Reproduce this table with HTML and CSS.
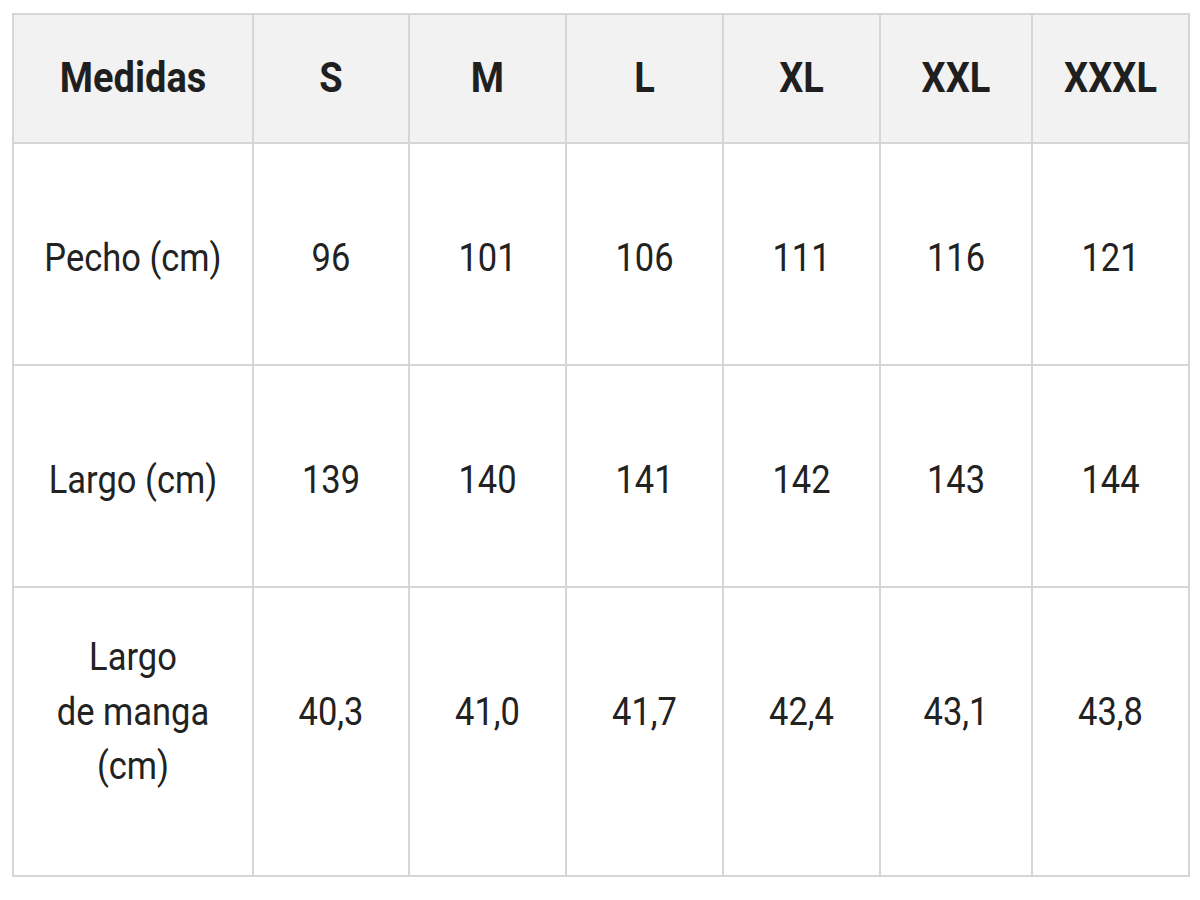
FILE: index.html
```html
<!DOCTYPE html>
<html>
<head>
<meta charset="utf-8">
<link rel="stylesheet" href="styles.css">
</head>
<body>
<table class="size-table">
  <colgroup>
    <col class="c-first">
    <col class="c-s"><col class="c-m"><col class="c-m"><col class="c-m"><col class="c-n"><col class="c-m">
  </colgroup>
  <thead>
    <tr class="head-row">
      <th><span class="t">Medidas</span></th><th><span class="t">S</span></th><th><span class="t">M</span></th><th><span class="t">L</span></th><th><span class="t">XL</span></th><th><span class="t">XXL</span></th><th><span class="t">XXXL</span></th>
    </tr>
  </thead>
  <tbody>
    <tr class="row-a">
      <td><span class="t">Pecho (cm)</span></td><td><span class="t">96</span></td><td><span class="t">101</span></td><td><span class="t">106</span></td><td><span class="t">111</span></td><td><span class="t">116</span></td><td><span class="t">121</span></td>
    </tr>
    <tr class="row-a">
      <td><span class="t">Largo (cm)</span></td><td><span class="t">139</span></td><td><span class="t">140</span></td><td><span class="t">141</span></td><td><span class="t">142</span></td><td><span class="t">143</span></td><td><span class="t">144</span></td>
    </tr>
    <tr class="row-b">
      <td><span class="t">Largo<br>de manga<br>(cm)</span></td><td><span class="t">40,3</span></td><td><span class="t">41,0</span></td><td><span class="t">41,7</span></td><td><span class="t">42,4</span></td><td><span class="t">43,1</span></td><td><span class="t">43,8</span></td>
    </tr>
  </tbody>
</table>
</body>
</html>
```

FILE: styles.css
```css
html, body {
  margin: 0;
  padding: 0;
  background: #ffffff;
}
body {
  padding: 13px 0 0 12px;
  font-family: Roboto, "Liberation Sans", Arial, sans-serif;
  color: #222222;
}
.size-table {
  border-collapse: collapse;
  width: 1176px;
  table-layout: fixed;
}
.c-first { width: 240px; }
.c-s { width: 156px; }
.c-m { width: 157px; }
.c-n { width: 152px; }
.size-table th,
.size-table td {
  border: 2px solid #d6d6d6;
  text-align: center;
  vertical-align: middle;
  padding: 0;
}
.t {
  display: inline-block;
  transform: scaleY(1.13);
}
.size-table th {
  background: #f2f2f2;
  font-weight: 700;
  font-size: 38px;
  line-height: 44px;
  color: #1f1f1f;
  padding-bottom: 3px;
}
.size-table td {
  font-size: 34.5px;
  font-weight: 400;
  line-height: 48px;
  padding-top: 6px;
}
.head-row { height: 129px; }
.row-a { height: 222px; }
.row-b { height: 289px; }
.row-b td { padding-top: 0; padding-bottom: 42px; }
```
